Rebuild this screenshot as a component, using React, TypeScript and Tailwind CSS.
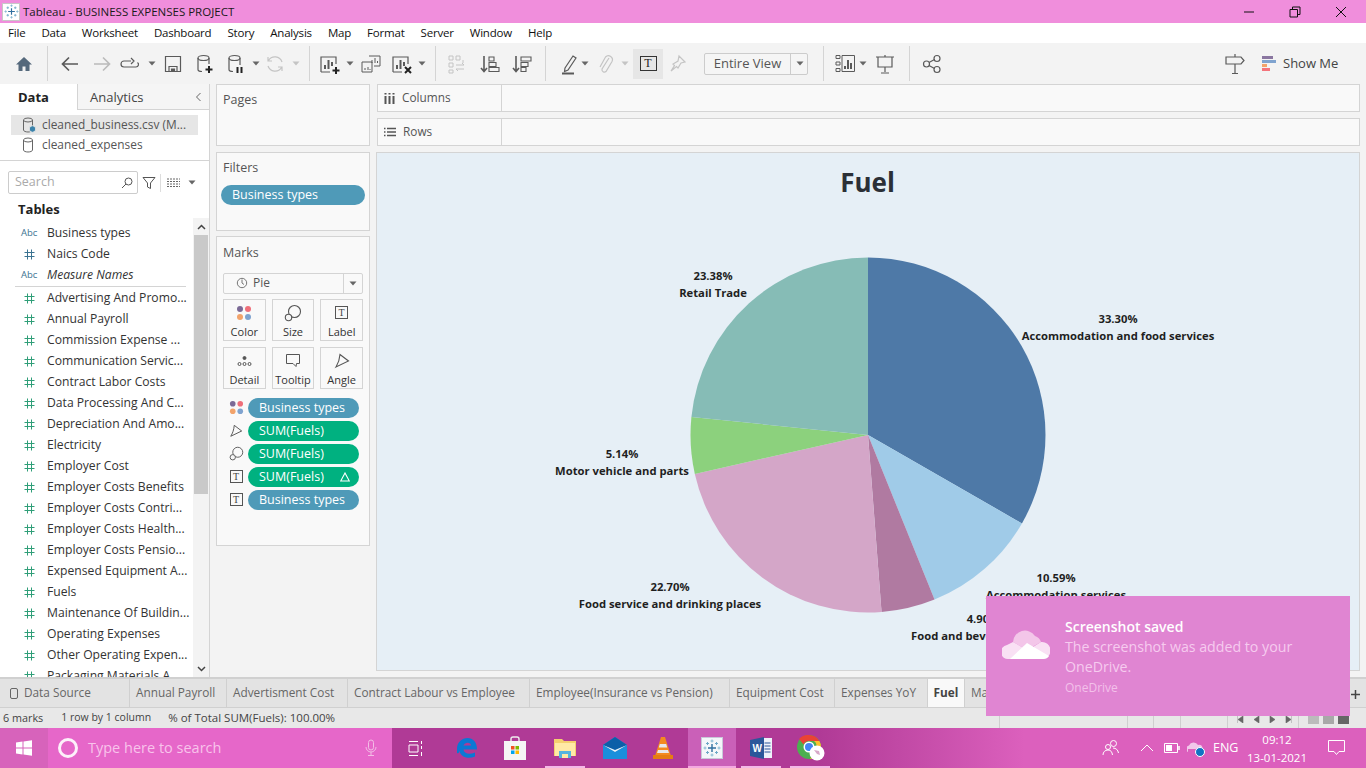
import type { ReactNode } from 'react'

const Ic = ({ children, className = '', size = 24, view = '0 0 24 24' }: { children: ReactNode; className?: string; size?: number; view?: string }) => (
  <svg width={size} height={size} viewBox={view} fill="none" stroke="currentColor" strokeWidth={1.2} className={`shrink-0 ${className}`}>
    {children}
  </svg>
)

const Caret = ({ className = '', light = false }: { className?: string; light?: boolean }) => (
  <svg width="8" height="5" viewBox="0 0 8 5" className={`shrink-0 ${className}`}>
    <path d="M0.5 0.5h7L4 4.5z" fill={light ? '#c4c4c4' : '#666'} />
  </svg>
)

const Sep = ({ className = '' }: { className?: string }) => <div className={`w-px h-[35px] bg-[#d4d4d4] shrink-0 ${className}`} />

const TableauLogo = ({ size = 18 }: { size?: number }) => (
  <svg width={size} height={size} viewBox="0 0 18 18" stroke="#3f7fa6" strokeWidth={1.2}>
    <path d="M9 5v8M5 9h8" strokeWidth={1.4} stroke="#2f6f9f" />
    <path d="M4.5 3v3M3 4.5h3M13.5 3v3M12 4.5h3M4.5 12v3M3 13.5h3M13.5 12v3M12 13.500h3" stroke="#6fa8c8" strokeWidth={1} />
    <path d="M9 0.500v3M7.5 2h3M9 14.500v3M7.5 16h3M0.500 9h3M2 7.500v3M14.500 9h3M16 7.500v3" stroke="#7fb4d0" strokeWidth={0.9} />
  </svg>
)

const Cylinder = ({ badge = false }: { badge?: boolean }) => (
  <svg width="14" height="16" viewBox="0 0 14 16" fill="none" stroke="#666" className="shrink-0">
    <ellipse cx="6" cy="3" rx="4.5" ry="2" />
    <path d="M1.500 3v10c0 1.100 2 2 4.500 2s4.500-.9 4.500-2V3" />
    {badge && <circle cx="10.500" cy="12" r="3.300" fill="#3b83ab" stroke="#e6e6e6" />}
  </svg>
)

const menu = ['File', 'Data', 'Worksheet', 'Dashboard', 'Story', 'Analysis', 'Map', 'Format', 'Server', 'Window', 'Help']

const topFields = [
  { name: 'Business types', kind: 'abc' },
  { name: 'Naics Code', kind: 'dim' },
  { name: 'Measure Names', kind: 'abc', italic: true },
]

const measures = [
  'Advertising And Promo...',
  'Annual Payroll',
  'Commission Expense ...',
  'Communication Servic...',
  'Contract Labor Costs',
  'Data Processing And C...',
  'Depreciation And Amo...',
  'Electricity',
  'Employer Cost',
  'Employer Costs Benefits',
  'Employer Costs Contri...',
  'Employer Costs Health...',
  'Employer Costs Pensio...',
  'Expensed Equipment A...',
  'Fuels',
  'Maintenance Of Buildin...',
  'Operating Expenses',
  'Other Operating Expen...',
  'Packaging Materials A...',
]

const tabs = [
  { name: 'Annual Payroll', w: 'w-[97px]' },
  { name: 'Advertisment Cost', w: 'w-[121px]' },
  { name: 'Contract Labour vs Employee', w: 'w-[182px]' },
  { name: 'Employee(Insurance vs Pension)', w: 'w-[200px]' },
  { name: 'Equipment Cost', w: 'w-[105px]' },
  { name: 'Expenses YoY', w: 'w-[93px]' },
]

// pie slices, clockwise from the top
const slices = [
  { pct: 33.3, color: '#4e79a7' },
  { pct: 10.59, color: '#a0cbe8' },
  { pct: 4.9, color: '#b07aa1' },
  { pct: 22.7, color: '#d4a6c8' },
  { pct: 5.14, color: '#8cd17d' },
  { pct: 23.38, color: '#86bcb6' },
]

function Pie() {
  const r = 177.5
  let a = 0
  const total = slices.reduce((s, x) => s + x.pct, 0)
  return (
    <svg width="356" height="356" viewBox="-178 -178 356 356">
      {slices.map((s) => {
        const a0 = a
        a += (s.pct / total) * Math.PI * 2
        const p = (t: number) => `${(Math.sin(t) * r).toFixed(2)} ${(-Math.cos(t) * r).toFixed(2)}`
        const large = a - a0 > Math.PI ? 1 : 0
        return <path key={s.color} d={`M0 0L${p(a0)}A${r} ${r} 0 ${large} 1 ${p(a)}Z`} fill={s.color} />
      })}
    </svg>
  )
}

const Dots = ({ size = 16 }: { size?: number }) => (
  <svg width={size} height={size} viewBox="0 0 16 16" className="shrink-0">
    <circle cx="4" cy="4" r="3" fill="#7b6a96" />
    <circle cx="12" cy="4" r="3" fill="#ef6f7a" />
    <circle cx="4" cy="12" r="3" fill="#f2a36b" />
    <circle cx="12" cy="12" r="3" fill="#7fa3cf" />
  </svg>
)

const SizeIcon = ({ size = 18 }: { size?: number }) => (
  <svg width={size} height={size} viewBox="0 0 18 18" fill="none" stroke="#555" strokeWidth={1.1} className="shrink-0">
    <circle cx="10.500" cy="7.500" r="6" />
    <circle cx="4.500" cy="13.500" r="3.200" fill="#f5f5f5" />
  </svg>
)

const AngleIcon = ({ size = 16 }: { size?: number }) => (
  <svg width={size} height={size} viewBox="0 0 16 16" fill="none" stroke="#555" strokeWidth={1.1} className="shrink-0">
    <path d="M6 1.500l8.500 6.500L2 14c2.200-3.500 3.600-7.500 4-12.500z" />
  </svg>
)

const TBox = () => (
  <div className="border border-[#555] flex items-center justify-center shrink-0 text-[#444] text-[10px] w-[13px] h-[13px] font-['Liberation_Serif',serif]">
    T
  </div>
)

function MarkCard({ label, icon }: { label: string; icon: ReactNode }) {
  return (
    <div className="h-[42px] border border-[#d4d4d4] flex flex-col items-center pt-[3px] text-[11px] text-[#333]">
      <div className="h-[20px] flex items-center">{icon}</div>
      <span className="leading-[14px] mt-[2px]">{label}</span>
    </div>
  )
}

function Pill({ color, children, icon }: { color: string; children: ReactNode; icon: ReactNode }) {
  return (
    <div className="flex items-center h-[20px] mb-[3px]">
      <div className="w-[16px] flex justify-center ml-[11px]">{icon}</div>
      <div className={`ml-[4px] w-[111px] h-[20px] rounded-[10px] ${color} text-white text-[12.5px] leading-[20px] pl-[11px] flex items-center justify-between pr-[9px]`}>{children}</div>
    </div>
  )
}

const Hash = ({ color }: { color: string }) => (
  <svg width="11" height="11" viewBox="0 0 11 11" stroke={color} strokeWidth={1} className="shrink-0">
    <path d="M3.500 0.500v10M7.500 0.500v10M0.500 3.500h10M0.500 7.500h10" />
  </svg>
)

function FieldRow({ name, kind, italic }: { name: string; kind: string; italic?: boolean }) {
  return (
    <div className="h-[21px] flex items-center whitespace-nowrap overflow-hidden">
      <div className="w-[47px] pl-[20px] flex justify-start shrink-0">
        {kind === 'abc' && <span className="text-[9.5px] text-[#3b7391] ml-[1px]">Abc</span>}
        {kind === 'dim' && <span className="ml-[4px]"><Hash color="#3b7391" /></span>}
        {kind === 'mea' && <span className="ml-[4px]"><Hash color="#2f9e78" /></span>}
      </div>
      <span className={`text-[12.15px] text-[#333] ${italic ? 'italic' : ''}`}>{name}</span>
    </div>
  )
}

const ChartLabel = ({ pos, pct, name }: { pos: string; pct: string; name: string }) => (
  <div className={`absolute -translate-x-1/2 text-center text-[11.25px] leading-[17px] font-bold text-[#1f1f1f] whitespace-nowrap ${pos}`}>
    <div>{pct}</div>
    <div>{name}</div>
  </div>
)

export default function App() {
  return (
    <div className="w-[1366px] h-[768px] overflow-hidden relative flex flex-col bg-[#f3f3f3] font-['Open_Sans','Noto_Sans',sans-serif] text-[#333]">
      {/* Title bar */}
      <div className="h-[23px] bg-[#f08edc] flex items-center shrink-0 text-[11.5px] text-[#1a1a1a]">
        <div className="ml-[2px] w-[18px] h-[18px] bg-white border border-[#c8c8c8] flex items-center justify-center">
          <TableauLogo size={15} />
        </div>
        <span className="ml-[3px]">Tableau - BUSINESS EXPENSES PROJECT</span>
        <div className="ml-auto flex items-center text-[#111]">
          <Ic size={12} view="0 0 12 12" className="mr-[34px]"><path d="M1 6h10" strokeWidth={1} /></Ic>
          <Ic size={12} view="0 0 12 12" className="mr-[34px]"><path d="M1 3.500h7.500V11H1zM3.500 3.500V1H11v7.500H8.500" strokeWidth={1} /></Ic>
          <Ic size={12} view="0 0 12 12" className="mr-[19px]"><path d="M1 1l10 10M11 1L1 11" strokeWidth={1} /></Ic>
        </div>
      </div>

      {/* Menu bar */}
      <div className="h-[20px] bg-white flex items-center shrink-0 text-[11.5px] tracking-[-0.2px] text-[#111] pl-[8px] gap-[16px]">
        {menu.map((m) => <span key={m}>{m}</span>)}
      </div>

      {/* Toolbar */}
      <div className="h-[41px] flex items-center shrink-0 text-[#5a5a5a]">
        <Ic className="ml-[12px] text-[#55697c]"><path d="M12 5L4 12.500h2.500V19h4v-4.500h3V19h4v-6.500H20z" fill="currentColor" stroke="none" /></Ic>
        <Sep className="ml-[11px]" />
        <Ic className="ml-[10px]"><path d="M20 12H5M11 5.500L4.500 12l6.500 6.500" strokeWidth={1.7} /></Ic>
        <Ic className="ml-[8px] text-[#bbb]"><path d="M4 12h15M13 5.500l6.500 6.500-6.500 6.500" strokeWidth={1.7} /></Ic>
        <Ic className="ml-[4px]"><path d="M13 9H6a2.500 2.500 0 0 0 0 6h12a2.500 2.500 0 0 0 1.500-4.500M13 6l3 3-3 3" /></Ic>
        <Caret className="ml-[6px]" />
        <Ic className="ml-[5px]"><path d="M4.500 4.500h15v15h-15zM8 19.500v-5h8v5" /><path d="M10.500 17h3v2.500h-3z" fill="currentColor" /></Ic>
        <Ic className="ml-[8px]"><ellipse cx="10.500" cy="6" rx="5.500" ry="2.500" /><path d="M5 6v11.500c0 1 1.500 2 4 2M16 6v6" /><path d="M16 14v7M12.500 17.500h7" stroke="#222" strokeWidth={2} /></Ic>
        <Ic className="ml-[7px]"><ellipse cx="10.500" cy="6" rx="5.500" ry="2.500" /><path d="M5 6v11.500c0 1 1.500 2 4 2M16 6v7" /><path d="M13.500 15v6M17.500 15v6" stroke="#222" strokeWidth={2} /></Ic>
        <Caret className="ml-[4px]" />
        <Ic className="ml-[3px] text-[#c4c4c4]"><path d="M19 10a7.500 7.500 0 0 0-13.500-1.500M5 14a7.500 7.500 0 0 0 13.500 1.500M5 5v4h4M19 19v-4h-4" /></Ic>
        <Caret className="ml-[5px]" light />
        <Sep className="ml-[9px]" />
        <Ic className="ml-[8px]"><path d="M3 20V5h15v7M3 20h9" /><path d="M7 17v-4M10.500 17V8M14 14v-4" strokeWidth={2} /><path d="M18 15v7M14.500 18.500h7" stroke="#222" strokeWidth={2} /></Ic>
        <Caret className="ml-[4px]" />
        <Ic className="ml-[5px]"><path d="M10 4h11v10h-6M3 10h10v10H3z" strokeWidth={1} /><path d="M13 11V8M16 11V6M18.500 11V9M6 18v-2M9 18v-3M11 18v-1" strokeWidth={1} /></Ic>
        <Ic className="ml-[7px]"><path d="M3 20V5h15v7M3 20h9" /><path d="M7 17v-4M10.500 17V8M14 14v-4" strokeWidth={2} /><path d="M15 15l6 6M21 15l-6 6" stroke="#222" strokeWidth={2} /></Ic>
        <Caret className="ml-[4px]" />
        <Sep className="ml-[9px]" />
        <Ic className="ml-[9px] text-[#c4c4c4]"><path d="M4 4h4v4H4zM11 4h4v4h-4zM4 11h4v4H4zM4 18h4v3H4zM18 8v3M11 13h8l-2-2M19 17h-8l2 2" strokeWidth={1} /></Ic>
        <Ic className="ml-[9px]"><path d="M6 4v15M3 16l3 3.500L9 16" strokeWidth={1.6} /><path d="M11 5h5v4h-5zM11 10.500h7v4h-7zM11 15.500h10v4H11z" strokeWidth={1.1} /></Ic>
        <Ic className="ml-[8px]"><path d="M6 4v15M3 16l3 3.500L9 16" strokeWidth={1.6} /><path d="M11 5h10v4H11zM11 10.500h7v4h-7zM11 15.500h5v4h-5z" strokeWidth={1.1} /></Ic>
        <Sep className="ml-[11px]" />
        <Ic className="ml-[11px]"><path d="M8 16L16 4l3 2-8 12-3.500 1.500z" /><path d="M5 21.500h12" strokeWidth={2} /></Ic>
        <Caret />
        <Ic className="ml-[4px] text-[#c4c4c4]"><path d="M16 6l-7 11a2.500 2.500 0 0 0 4 2.500l6-10a4 4 0 0 0-6.500-4.500L7 15" /></Ic>
        <Caret className="ml-[4px]" light />
        <div className="ml-[4px] w-[30px] h-[30px] bg-[#e6e6e6] flex items-center justify-center">
          <div className="w-[17px] h-[15px] border border-[#333] text-[#222] text-[12px] leading-[13px] text-center font-['Liberation_Serif',serif]">T</div>
        </div>
        <Ic className="ml-[2px] text-[#c4c4c4]"><path d="M14 4l6 6-4 1-3 5-1.500-1.500L6 19l3.500-5.500L8 12l5-3z" /></Ic>
        <div className="ml-[15px] w-[104px] h-[22px] bg-[#f5f5f5] border border-[#ccc] rounded-[2px] flex items-center text-[13px] text-[#555]">
          <span className="w-[85px] text-center">Entire View</span>
          <div className="w-px h-full bg-[#ccc]" />
          <Caret className="ml-[5px]" />
        </div>
        <Sep className="ml-[15px]" />
        <Ic className="ml-[10px]"><path d="M2 3.500h4v3H2zM2 10h4v3H2zM2 16.500h4v3H2zM8 3.500h12.500v16H8z" strokeWidth={1} /><path d="M11 17v-3M14 17V8M17 17v-6" strokeWidth={2} /></Ic>
        <Caret className="ml-[1px]" />
        <Ic className="ml-[6px]"><path d="M3 5h18M5 5v10h14V5M12 15v5M8 21h8M12 3v2" /></Ic>
        <Sep className="ml-[12px]" />
        <Ic className="ml-[10px]"><circle cx="6.500" cy="12" r="3" /><circle cx="17" cy="6.500" r="3" /><circle cx="17" cy="17.500" r="3" /><path d="M9 10.500l5.500-3M9 13.500l5.500 3" /></Ic>
        <Ic className="ml-[279px]"><path d="M12 2v3M3 5h15l3 3.500-3 3.500H3zM12 12v9M9 21.500h6" /></Ic>
        <div className="ml-[15px] w-[15px] flex flex-col gap-[1px] shrink-0">
          <div className="h-[3px] w-[11px] bg-[#8a76a0]" />
          <div className="h-[3px] w-[14px] bg-[#7fa3cf]" />
          <div className="h-[3px] w-[5px] bg-[#f2a36b]" />
          <div className="h-[3px] w-[8px] bg-[#f4747c]" />
        </div>
        <span className="ml-[6px] text-[13px] text-[#444]">Show Me</span>
      </div>

      {/* Main area */}
      <div className="h-[593px] flex shrink-0 overflow-hidden">
        {/* Data pane */}
        <div className="w-[210px] bg-white border-r border-[#d4d4d4] flex flex-col shrink-0 overflow-hidden">
          <div className="h-[26px] flex shrink-0 text-[13px]">
            <div className="w-[77px] pl-[18px] font-bold text-[#222] leading-[27px]">Data</div>
            <div className="flex-1 bg-[#f5f5f5] border-l border-b border-[#d4d4d4] flex items-center text-[#444]">
              <span className="ml-[12px] mt-[2px]">Analytics</span>
              <svg width="7" height="10" viewBox="0 0 7 10" fill="none" stroke="#666" className="ml-auto mr-[7px]"><path d="M5.500 1L1.500 5l4 4" /></svg>
            </div>
          </div>
          <div className="h-[51px] border-b border-[#d4d4d4] pt-[5px] shrink-0">
            <div className="mx-[11px] h-[20px] bg-[#e6e6e6] flex items-center text-[11.9px] text-[#555] whitespace-nowrap">
              <div className="ml-[11px] flex"><Cylinder badge /></div>
              <span className="ml-[6px]">cleaned_business.csv (M...</span>
            </div>
            <div className="mx-[11px] h-[20px] flex items-center text-[11.9px] text-[#555] whitespace-nowrap">
              <div className="ml-[11px] flex"><Cylinder /></div>
              <span className="ml-[6px]">cleaned_expenses</span>
            </div>
          </div>
          <div className="flex items-center mt-[10px] shrink-0">
            <div className="ml-[8px] w-[130px] h-[23px] border border-[#ccc] rounded-[2px] flex items-center text-[12.5px] text-[#aaa] pl-[6px] pr-[4px] justify-between">
              Search
              <svg width="12" height="12" viewBox="0 0 12 12" fill="none" stroke="#555"><circle cx="7.500" cy="4.500" r="3.500" /><path d="M5 7l-4 4" /></svg>
            </div>
            <svg width="14" height="14" viewBox="0 0 14 14" fill="none" stroke="#555" className="ml-[4px]"><path d="M1 1.500h12L8.500 7v5.500l-3-1.500V7z" /></svg>
            <div className="w-px h-[18px] bg-[#ddd] ml-[4px]" />
            <svg width="13" height="10" viewBox="0 0 13 10" stroke="#666" strokeDasharray="2 1" className="ml-[6px]"><path d="M0 1h13M0 3.500h13M0 6h13M0 8.500h13" /></svg>
            <Caret className="ml-[8px]" />
          </div>
          <div className="flex-1 flex flex-col min-h-0 mt-[6px]">
            <div className="h-[20px] pl-[18px] text-[13px] font-bold text-[#222] leading-[18px] shrink-0">Tables</div>
            <div className="flex-1 flex min-h-0 -mt-[2px]">
              <div className="w-[193px] overflow-hidden pt-[5px]">
                {topFields.map((f) => <FieldRow key={f.name} {...f} />)}
                <div className="ml-[15px] w-[171px] h-px bg-[#d4d4d4] mb-px" />
                {measures.map((m) => <FieldRow key={m} name={m} kind="mea" />)}
              </div>
              <div className="w-[16px] bg-[#f3f3f3] flex flex-col shrink-0">
                <div className="h-[17px] flex items-center justify-center">
                  <svg width="9" height="6" viewBox="0 0 9 6" fill="none" stroke="#444" strokeWidth={1.5}><path d="M1 5l3.500-3.500L8 5" /></svg>
                </div>
                <div className="h-[259px] bg-[#c9c9c9] mx-px" />
                <div className="flex-1" />
                <div className="h-[17px] flex items-center justify-center">
                  <svg width="9" height="6" viewBox="0 0 9 6" fill="none" stroke="#444" strokeWidth={1.5}><path d="M1 1l3.500 3.500L8 1" /></svg>
                </div>
              </div>
            </div>
          </div>
        </div>

        {/* Shelves column */}
        <div className="w-[154px] ml-[6px] shrink-0 flex flex-col">
          <div className="h-[62px] border border-[#d4d4d4] bg-[#f9f9f9] pl-[6px] pt-[6px] text-[12.5px] text-[#555] shrink-0">Pages</div>
          <div className="h-[79px] mt-[6px] border border-[#d4d4d4] bg-[#f9f9f9] px-[4px] pt-[6px] shrink-0">
            <div className="pl-[2px] text-[12.5px] text-[#555]">Filters</div>
            <div className="mt-[7px] h-[20px] w-[144px] rounded-[10px] bg-[#4f9ab8] text-white text-[12.5px] leading-[20px] pl-[11px]">Business types</div>
          </div>
          <div className="h-[310px] mt-[5px] border border-[#d4d4d4] bg-[#f9f9f9] pt-[7px] shrink-0">
            <div className="pl-[6px] text-[12.5px] text-[#555]">Marks</div>
            <div className="mx-[6px] mt-[10px] h-[21px] border border-[#d4d4d4] rounded-[2px] flex items-center text-[12px] text-[#555]">
              <svg width="12" height="12" viewBox="0 0 12 12" fill="none" stroke="#777" className="ml-[12px]"><circle cx="6" cy="6" r="4.700" /><path d="M6 2.500V6l2 1.500" /></svg>
              <span className="ml-[5px]">Pie</span>
              <div className="ml-auto w-px h-full bg-[#d4d4d4]" />
              <Caret className="mx-[5px]" />
            </div>
            <div className="mx-[6px] mt-[5px] grid grid-cols-3 gap-x-[6px] gap-y-[6px]">
              <MarkCard label="Color" icon={<Dots />} />
              <MarkCard label="Size" icon={<SizeIcon />} />
              <MarkCard label="Label" icon={<TBox />} />
              <MarkCard label="Detail" icon={<svg width="15" height="12" viewBox="0 0 15 12" fill="none" stroke="#555"><circle cx="7.500" cy="3" r="1.500" fill="#555" /><circle cx="2.500" cy="9" r="1.500" /><circle cx="7.500" cy="9" r="1.500" /><circle cx="12.500" cy="9" r="1.500" /></svg>} />
              <MarkCard label="Tooltip" icon={<svg width="16" height="15" viewBox="0 0 16 15" fill="none" stroke="#555"><path d="M1.500 1.500h13v9h-3l-.5 3-3-3H1.500z" /></svg>} />
              <MarkCard label="Angle" icon={<AngleIcon />} />
            </div>
            <div className="mt-[9px]">
              <Pill color="bg-[#4f9ab8]" icon={<Dots size={15} />}>Business types</Pill>
              <Pill color="bg-[#00b180]" icon={<AngleIcon size={14} />}>SUM(Fuels)</Pill>
              <Pill color="bg-[#00b180]" icon={<SizeIcon size={15} />}>SUM(Fuels)</Pill>
              <Pill color="bg-[#00b180]" icon={<TBox />}>
                SUM(Fuels)
                <svg width="10" height="10" viewBox="0 0 10 10" fill="none" stroke="#fff" strokeWidth={1.1}><path d="M5 1L9.300 9H.7z" /></svg>
              </Pill>
              <Pill color="bg-[#4f9ab8]" icon={<TBox />}>Business types</Pill>
            </div>
          </div>
        </div>

        {/* Shelves + view */}
        <div className="w-[983px] ml-[7px] shrink-0 flex flex-col">
          <div className="h-[28px] border border-[#d4d4d4] bg-[#f9f9f9] flex items-center shrink-0 text-[11.8px] text-[#555]">
            <div className="w-[124px] h-full border-r border-[#d4d4d4] flex items-center pl-[6px]">
              <svg width="11" height="11" viewBox="0 0 11 11" stroke="#555" strokeWidth={2}><path d="M1.500 3v8M5.500 3v8M9.500 3v8" /><path d="M1.500 0v1.500M5.500 0v1.500M9.500 0v1.500" /></svg>
              <span className="ml-[7px]">Columns</span>
            </div>
          </div>
          <div className="h-[28px] mt-[6px] border border-[#d4d4d4] bg-[#f9f9f9] flex items-center shrink-0 text-[11.8px] text-[#555]">
            <div className="w-[124px] h-full border-r border-[#d4d4d4] flex items-center pl-[6px]">
              <svg width="12" height="10" viewBox="0 0 12 10" stroke="#555" strokeWidth={1.5}><path d="M3 1.500h9M3 5h9M3 8.500h9M0 1.500h1.500M0 5h1.500M0 8.500h1.500" /></svg>
              <span className="ml-[7px]">Rows</span>
            </div>
          </div>
          <div className="relative -ml-px h-[519px] mt-[6px] bg-[#e6eff6] border border-[#d4d4d4] shrink-0">
            <div className="text-center text-[26px] font-bold text-[#2b2f36] leading-[36px] mt-[11px] -ml-[1px]">Fuel</div>
            <div className="absolute left-[313px] top-[104px]"><Pie /></div>
            <ChartLabel pos="left-[336px] top-[114px]" pct="23.38%" name="Retail Trade" />
            <ChartLabel pos="left-[741px] top-[157px]" pct="33.30%" name="Accommodation and food services" />
            <ChartLabel pos="left-[245px] top-[292px]" pct="5.14%" name="Motor vehicle and parts" />
            <ChartLabel pos="left-[293px] top-[425px]" pct="22.70%" name="Food service and drinking places" />
            <ChartLabel pos="left-[679px] top-[416px]" pct="10.59%" name="Accommodation services" />
            <ChartLabel pos="left-[606px] top-[457px]" pct="4.90%" name="Food and beverage stores" />
          </div>
        </div>
      </div>

      {/* Sheet tabs */}
      <div className="h-[31px] bg-[#e3e3e3] border-t-2 border-b border-[#d0d0d0] flex items-stretch shrink-0 text-[11.8px] text-[#666] whitespace-nowrap overflow-hidden">
        <div className="w-[130px] border-r border-[#d0d0d0] flex items-center pl-[10px] shrink-0">
          <div className="w-[8px] h-[11px] border border-[#666] rounded-[2px]" />
          <span className="ml-[6px]">Data Source</span>
        </div>
        {tabs.map((t) => (
          <div key={t.name} className={`${t.w} border-r border-[#d0d0d0] flex items-center pl-[6px] shrink-0`}>{t.name}</div>
        ))}
        <div className="w-[37px] bg-[#f9f9f9] border-r border-[#d0d0d0] flex items-center justify-center font-bold text-[#444] shrink-0">Fuel</div>
        <div className="pl-[6px] flex items-center">Map</div>
        <svg width="11" height="11" viewBox="0 0 11 11" stroke="#444" strokeWidth={1.5} className="ml-auto mr-[5px] mt-[10px]"><path d="M5.500 1v9M1 5.500h9" /></svg>
      </div>

      {/* Status bar */}
      <div className="h-[20px] bg-[#e8e8e8] flex items-center shrink-0 text-[11.5px] text-[#444] whitespace-nowrap relative">
        <span className="ml-[3px] text-[10.8px]">6 marks</span>
        <span className="ml-[18px] text-[10.5px]">1 row by 1 column</span>
        <span className="ml-[17px]">% of Total SUM(Fuels): 100.00%</span>
        <div className="absolute left-[999px] top-0 bottom-0 w-px bg-[#cfcfcf]" />
        <div className="absolute left-[1127px] top-0 bottom-0 w-px bg-[#cfcfcf]" />
        <div className="absolute left-[1153px] top-0 bottom-0 w-px bg-[#cfcfcf]" />
        <div className="absolute left-[1180px] top-0 bottom-0 w-px bg-[#cfcfcf]" />
        <div className="absolute left-[1227px] top-0 bottom-0 w-px bg-[#cfcfcf]" />
        <div className="absolute left-[1298px] top-0 bottom-0 w-px bg-[#cfcfcf]" />
        <div className="absolute left-[1237px] top-[8px] flex items-center gap-[9px]">
          {['M6 0v7L1 3.500zM0 0v7', 'M6 0v7L1 3.500z', 'M1 0v7l5-3.500z', 'M1 0v7l5-3.500zM7 0v7'].map((d) => (
            <svg key={d} width="7" height="7" viewBox="0 0 7 7" fill="#666" stroke="#666" strokeWidth={0.6}><path d={d} /></svg>
          ))}
        </div>
        <div className="absolute left-[1308px] top-[6px] flex gap-[4px]">
          <div className="w-[11px] h-[10px] bg-[#bbb]" />
          <div className="w-[11px] h-[10px] bg-[#a8a8a8]" />
          <div className="w-[11px] h-[10px] bg-[#666]" />
        </div>
      </div>

      {/* Taskbar */}
      <div className="h-[40px] flex items-stretch shrink-0 bg-gradient-to-r from-[#b03a96] from-60% to-[#dc60bd] to-75% text-white">
        <div className="w-[48px] bg-[#d763bb] flex items-center justify-center shrink-0">
          <svg width="16" height="16" viewBox="0 0 16 16" fill="#fff"><path d="M0 2.500l6.500-.9v6H0zM7.500 1.500L16 .3v7.300H7.500zM0 8.500h6.500v6L0 13.600zM7.500 8.500H16v7.200l-8.500-1.200z" /></svg>
        </div>
        <div className="w-[344px] bg-[#e667c9] flex items-center shrink-0">
          <div className="ml-[10px] w-[20px] h-[20px] rounded-full border-[3px] border-white/90" />
          <span className="ml-[10px] text-[14.5px] text-[#f8c3eb]">Type here to search</span>
          <svg width="12" height="18" viewBox="0 0 12 18" fill="none" stroke="#f3bde6" className="ml-auto mr-[15px]"><rect x="3.500" y="1" width="5" height="10" rx="2.500" /><path d="M1 8a5 5 0 0 0 10 0M6 13v3M3 16.500h6" /></svg>
        </div>
        <div className="flex items-center w-[48px] justify-center shrink-0">
          <svg width="16" height="15" viewBox="0 0 16 15" fill="none" stroke="#fff"><path d="M1 0.500h9M1 14.500h9M1 4h9v7H1zM13.500 0v3M13.500 5v3M13.500 11v4" /></svg>
        </div>
        <div className="w-[48px] flex items-center justify-center shrink-0 ml-[3px]">
          <svg width="22" height="22" viewBox="0 0 22 22"><path d="M1 12C1 5 6 1 11.500 1 17 1 21 5 21 12.500H7.500c.3 4 5.500 5.500 11.500 3v4c-7 3-15 .5-15.500-6 0 0-.5 4-2.500 2.500z" fill="#0a78d4" /><path d="M7.500 8.500h7.500c0-3.500-6-4-7.500 0z" fill="#b03a96" /></svg>
        </div>
        <div className="w-[48px] flex items-center justify-center shrink-0">
          <svg width="24" height="26" viewBox="0 0 24 26"><path d="M8 6V4a2 2 0 0 1 2-2h4a2 2 0 0 1 2 2v2" fill="none" stroke="#eee" strokeWidth={1.4} /><path d="M1 6h22v19H1z" fill="#f5f5f5" /><path d="M8 11h3.500v3.500H8z" fill="#f25022" /><path d="M12.500 11H16v3.500h-3.500z" fill="#7fba00" /><path d="M8 15.500h3.500V19H8z" fill="#00a4ef" /><path d="M12.500 15.500H16V19h-3.500z" fill="#ffb900" /></svg>
        </div>
        <div className="w-[52px] relative flex items-center justify-center shrink-0">
          <svg width="22" height="20" viewBox="0 0 22 20"><path d="M0 1h8l2 2h12v15H0z" fill="#f5d06f" /><path d="M1 5h20v13H1z" fill="#ffe9a6" /><path d="M5 13h12v7H5z" fill="#56b4e0" /><path d="M8 16h6v4H8z" fill="#ffe9a6" /></svg>
          <div className="absolute left-[6px] right-[6px] bottom-0 h-[2px] bg-[#f3b8e6]" />
        </div>
        <div className="w-[47px] flex items-center justify-center shrink-0">
          <svg width="24" height="22" viewBox="0 0 24 22"><path d="M12 0L24 8v14H0V8z" fill="#1a8fdc" /><path d="M12 0L24 8l-12 7L0 8z" fill="#0b5fa8" /><path d="M0 8l12 7 12-7-12 5z" fill="#e9f4fb" /></svg>
        </div>
        <div className="w-[50px] flex items-center justify-center shrink-0">
          <svg width="20" height="22" viewBox="0 0 20 22"><path d="M8 0h4l6 19H2z" fill="#f48a1e" /><path d="M6.800 7h6.400l1 3.500H5.800zM5 13h10l1 3H4z" fill="#e8e8e8" /><path d="M0 18h20v4H0z" fill="#e67d12" /></svg>
        </div>
        <div className="w-[48px] bg-[#ca60b8] relative flex items-center justify-center shrink-0">
          <div className="w-[22px] h-[22px] bg-[#f4f7fa] border border-[#c9c9d9] flex items-center justify-center"><TableauLogo size={18} /></div>
          <div className="absolute left-0 right-0 bottom-0 h-[2px] bg-[#f3a8e0]" />
        </div>
        <div className="w-[50px] relative flex items-center justify-center shrink-0">
          <svg width="22" height="22" viewBox="0 0 22 22"><path d="M13 1h9v20h-9z" fill="#eef2fa" /><path d="M14.500 6h6M14.500 9h6M14.500 12h6M14.500 15h6" stroke="#2b579a" /><path d="M0 3l14-3v22L0 19z" fill="#2b579a" /><text x="2.500" y="14.500" fontSize="10" fontWeight="700" fill="#fff" fontFamily="Liberation Sans">W</text></svg>
          <div className="absolute left-[5px] right-[5px] bottom-0 h-[2px] bg-[#f3b8e6]" />
        </div>
        <div className="w-[50px] relative flex items-center justify-center shrink-0">
          <svg width="28" height="26" viewBox="0 0 28 26">
            <circle cx="12" cy="12" r="12" fill="#4caf50" />
            <path d="M12 0a12 12 0 0 1 10.400 6H12a6 6 0 0 0-5.500 3.500L2 4a12 12 0 0 1 10-4z" fill="#ea4335" />
            <path d="M22.400 6A12 12 0 0 1 13 24l5-9a6 6 0 0 0-1-9z" fill="#fbc02d" />
            <circle cx="12" cy="12" r="5.500" fill="#fff" />
            <circle cx="12" cy="12" r="4" fill="#4285f4" />
            <circle cx="20" cy="18" r="7.500" fill="#fff" />
            <path d="M17 15l5 1 1 4-3-1z" fill="#d8a8c8" />
          </svg>
          <div className="absolute left-[4px] right-[6px] bottom-0 h-[2px] bg-[#f3b8e6]" />
        </div>

        <div className="ml-auto relative w-[264px] shrink-0">
          <svg width="18" height="18" viewBox="0 0 18 18" fill="none" stroke="#fff" className="absolute left-[0px] top-[11px]"><circle cx="11.500" cy="4.500" r="3" /><circle cx="6" cy="8" r="2.500" /><path d="M1 16c0-3 2-5 5-5s4 2 4.500 5M11 9c3 0 5 2 5.500 5" /></svg>
          <svg width="14" height="8" viewBox="0 0 14 8" fill="none" stroke="#fff" className="absolute left-[38px] top-[16px]"><path d="M1 7l6-6 6 6" /></svg>
          <svg width="16" height="10" viewBox="0 0 16 10" fill="none" stroke="#fff" className="absolute left-[62px] top-[15px]"><path d="M.5.500h13v9H.5z" /><path d="M2 2h6v6H2z" fill="#fff" stroke="none" /><path d="M15 3v4" strokeWidth={1.5} /></svg>
          <svg width="18" height="16" viewBox="0 0 18 16" className="absolute left-[85px] top-[13px]"><path d="M1 11a3.500 3.500 0 0 1 1-6.500A5 5 0 0 1 11 4a3 3 0 0 1 4 4H1z" fill="#f1c8ea" /><circle cx="13" cy="11" r="4.500" fill="#1173c4" stroke="#fff" /></svg>
          <span className="absolute left-[111px] top-[11px] text-[12.5px]">ENG</span>
          <div className="absolute left-[135px] w-[80px] top-[3px] text-center text-[11.5px] leading-[18px]">
            <div>09:12</div>
            <div>13-01-2021</div>
          </div>
          <svg width="17" height="16" viewBox="0 0 17 16" fill="none" stroke="#fff" className="absolute left-[226px] top-[12px]"><path d="M.5.500h16v11H11l-2.500 3-2.500-3H.5z" /></svg>
        </div>
      </div>

      {/* OneDrive notification */}
      <div className="absolute left-[986px] top-[596px] w-[364px] h-[120px] bg-[#e085d2] text-white flex">
        <svg width="48" height="32" viewBox="0 0 48 32" className="ml-[16px] mt-[32px] shrink-0">
          <path d="M11 14a12 12 0 0 1 22-6 9 9 0 0 1 6 6l-14 8z" fill="#f3c6e9" />
          <path d="M11 14l14 8-13 9H7a7 7 0 0 1-2-14z" fill="#f9e0f4" />
          <path d="M39 14a7.500 7.500 0 0 1 2 17H12l27-17z" fill="#f9e0f4" />
          <path d="M25 15l22 13c-1 2-3 3-6 3H8z" fill="#fff" />
        </svg>
        <div className="ml-[15px] mt-[21px]">
          <div className="text-[14px] font-semibold leading-[20px]">Screenshot saved</div>
          <div className="text-[14.2px] leading-[20px] text-[#f6cbef] w-[260px]">The screenshot was added to your OneDrive.</div>
          <div className="text-[12px] leading-[20px] text-[#f3c0ea] mt-[1px]">OneDrive</div>
        </div>
      </div>
    </div>
  )
}
